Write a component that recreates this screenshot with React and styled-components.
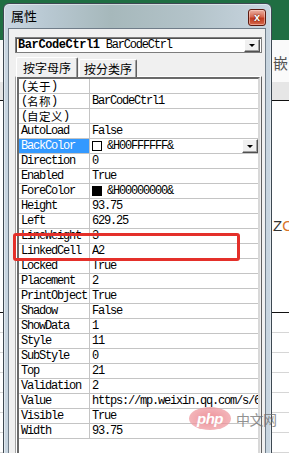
import React from "react";
import styled, { createGlobalStyle } from "styled-components";

const Global = createGlobalStyle`
  html, body { margin: 0; padding: 0; }
  body { width: 289px; height: 453px; overflow: hidden; background: #fff; }
  * { box-sizing: border-box; }
`;

const Stage = styled.div`
  position: relative;
  width: 289px;
  height: 453px;
  overflow: hidden;
  background: #fff;
  font-family: "Liberation Mono", "Noto Sans CJK SC", monospace;
`;

/* ---------- Excel backdrop ---------- */
const Backdrop = styled.div`
  display: flex;
  flex-direction: column;
  width: 100%;
  height: 100%;
`;
const Ribbon = styled.div`
  height: 40px;
  flex: none;
  background: #1f6e42;
`;
const SheetHeader = styled.div`
  height: 61px;
  flex: none;
  padding: 14px 0 0 273px;
  background: linear-gradient(#fafafa 0 70%, #e6e6e6 70%);
  border-bottom: 1px solid #111;
  font: 15px "Noto Sans CJK SC", sans-serif;
  color: #555;
  line-height: 18px;
`;
const ChartArea = styled.div`
  height: 212px;
  flex: none;
  padding: 116px 0 0 273px;
  border-bottom: 1px solid #111;
  font: 15px "Liberation Sans", sans-serif;
  color: #333;
  line-height: 18px;
`;
const Orange = styled.span`
  color: #d8762c;
`;
const SheetRow = styled.div`
  height: 20px;
  flex: none;
  border-bottom: 1px solid #d6d6d6;
`;

/* ---------- dialog window ---------- */
const Window = styled.div`
  position: absolute;
  left: 3px;
  top: 3px;
  width: 269px;
  height: 470px;
  display: flex;
  flex-direction: column;
  border: 1px solid #3d4852;
  border-radius: 6px 6px 0 0;
  background: linear-gradient(90deg, #c9d6e1 0%, #b9c9d3 15%, #a6b8bb 40%, #b3c3c9 70%, #c8d5e0 100%);
  box-shadow: inset 0 0 0 1px rgba(255, 255, 255, 0.45);
  padding: 0 5px 0 4px;
`;
const TitleBar = styled.div`
  height: 24px;
  flex: none;
  display: flex;
  align-items: flex-start;
  justify-content: space-between;
  padding: 0 0 0 3px;
`;
const Title = styled.span`
  font: 13px "Noto Sans CJK SC", sans-serif;
  line-height: 22px;
  color: #000;
  padding-top: 1px;
`;
const CloseButton = styled.div`
  width: 18px;
  height: 17px;
  margin-top: 5px;
  border: 1px solid #5c1a10;
  border-radius: 3px;
  background: linear-gradient(#eab0a3 0%, #d86a52 45%, #c13b20 55%, #d5684c 100%);
  box-shadow: inset 0 0 0 1px rgba(255, 220, 210, 0.5);
  display: flex;
  align-items: center;
  justify-content: center;
  color: #fff;
  font: bold 11px "Liberation Sans", sans-serif;
  line-height: 1;
  text-shadow: 0 0 2px #6a1a0c, 0 0 1px #6a1a0c;
`;
const Client = styled.div`
  flex: 1;
  display: flex;
  flex-direction: column;
  background: #f0f0f0;
  border: 1px solid #707d89;
  border-bottom: none;
`;

/* ---------- combo ---------- */
const Combo = styled.div`
  margin: 8px 0 0 6px;
  width: 247px;
  height: 16px;
  display: flex;
  align-items: center;
  background: #fff;
  border: 1px solid #7d7d7d;
  box-shadow: inset 1px 1px 0 #505050;
  padding: 0 1px 0 2px;
  font-size: 12px;
  letter-spacing: -1.2px;
  line-height: 14px;
  color: #000;
  white-space: pre;
`;
const ComboBold = styled.b`
  font-weight: bold;
  letter-spacing: -0.4px;
`;
const ComboFill = styled.span`
  flex: 1;
`;
const DropButton = styled.div`
  width: 16px;
  height: ${(p) => p.$h || 13}px;
  flex: none;
  display: flex;
  align-items: center;
  justify-content: center;
  background: #f0f0f0;
  border-top: 1px solid #fff;
  border-left: 1px solid #fff;
  border-right: 1px solid #505050;
  border-bottom: 1px solid #505050;
  box-shadow: inset -1px -1px 0 #a0a0a0;
  &::after {
    content: "";
    border-left: 3px solid transparent;
    border-right: 3px solid transparent;
    border-top: 3px solid #000;
  }
`;

/* ---------- tabs ---------- */
const TabStrip = styled.div`
  display: flex;
  align-items: flex-end;
  margin: 4px 0 -1px 7px;
  height: 20px;
  position: relative;
  z-index: 1;
`;
const Tab = styled.div`
  height: ${(p) => (p.$active ? 20 : 18)}px;
  padding: 0 ${(p) => (p.$active ? 6 : 4)}px;
  display: flex;
  align-items: center;
  background: #f0f0f0;
  border-top: 1px solid #fff;
  border-left: 1px solid #fff;
  border-right: 1px solid #606060;
  border-radius: 2px 2px 0 0;
  box-shadow: inset -1px 0 0 #a0a0a0;
  font: 12px "Noto Sans CJK SC", sans-serif;
  line-height: 16px;
  color: #000;
  margin-right: ${(p) => (p.$active ? 1 : 0)}px;
`;
const TabPanel = styled.div`
  flex: 1;
  margin-left: 6px;
  width: 247px;
  display: flex;
  flex-direction: column;
  border-top: 1px solid #fff;
  border-left: 1px solid #a3a3a3;
  border-right: 1px solid #606060;
  box-shadow: inset 1px 0 0 #fff;
  padding: 0 1px;
`;

/* ---------- property grid ---------- */
const Grid = styled.div`
  flex: 1;
  background: #fff;
  border-top: 2px solid #6a6a6a;
  border-left: 2px solid #6a6a6a;
  border-right: 2px solid #d8d8d8;
  display: flex;
  flex-direction: column;
  font-size: 12px;
  letter-spacing: -1.2px;
  color: #000;
`;
const Row = styled.div`
  display: grid;
  grid-template-columns: 71px 1fr;
  height: 15px;
  flex: none;
  border-bottom: 1px solid #c4c4c4;
`;
const NameCell = styled.div`
  height: 14px;
  display: flex;
  align-items: center;
  border-right: 1px solid #c4c4c4;
  padding-left: 2px;
  line-height: 14px;
  white-space: pre;
  overflow: hidden;
  background: ${(p) => (p.$selected ? "#3399ff" : "transparent")};
  color: ${(p) => (p.$selected ? "#fff" : "#000")};
`;
const ValueCell = styled.div`
  height: 14px;
  display: flex;
  align-items: center;
  padding-left: 2px;
  line-height: 14px;
  white-space: nowrap;
  overflow: hidden;
`;
const ValueText = styled.span`
  flex: 1;
  overflow: hidden;
`;
const Cjk = styled.span`
  display: inline-block;
  vertical-align: top;
  height: 14px;
  overflow: hidden;
  font: 11.5px/14px "Noto Sans CJK SC", sans-serif;
  letter-spacing: 0.5px;
`;
const Swatch = styled.span`
  width: 10px;
  height: 10px;
  flex: none;
  margin-right: 5px;
  border: 1px solid #000;
  background: ${(p) => p.$color};
`;

/* ---------- overlays ---------- */
const Marker = styled.div`
  position: absolute;
  left: 13px;
  top: 233px;
  width: 227px;
  height: 28px;
  border: 3px solid #e4302a;
  border-radius: 3px;
`;
const Watermark = styled.div`
  position: absolute;
  left: 189px;
  top: 407px;
  display: flex;
  align-items: center;
  gap: 5px;
  opacity: 0.75;
`;
const PhpBadge = styled.span`
  width: 42px;
  height: 23px;
  border-radius: 50%;
  background: radial-gradient(ellipse at 50% 50%, #e9707a 0%, #f0a2a8 80%, #f6c6ca 100%);
  color: #fff;
  font: italic bold 15px/1 "Liberation Sans", sans-serif;
  display: flex;
  align-items: center;
  justify-content: center;
  letter-spacing: -0.5px;
`;
const WatermarkText = styled.span`
  font: 14px/1 "Noto Sans CJK SC", sans-serif;
  color: #6d6d6d;
  letter-spacing: -0.5px;
`;

const props = [
  { cjk: "关于" },
  { cjk: "名称", value: "BarCodeCtrl1" },
  { cjk: "自定义" },
  { name: "AutoLoad", value: "False" },
  { name: "BackColor", value: "&H00FFFFFF&", swatch: "#fff", selected: true, dropdown: true },
  { name: "Direction", value: "0" },
  { name: "Enabled", value: "True" },
  { name: "ForeColor", value: "&H00000000&", swatch: "#000" },
  { name: "Height", value: "93.75" },
  { name: "Left", value: "629.25" },
  { name: "LineWeight", value: "3" },
  { name: "LinkedCell", value: "A2" },
  { name: "Locked", value: "True" },
  { name: "Placement", value: "2" },
  { name: "PrintObject", value: "True" },
  { name: "Shadow", value: "False" },
  { name: "ShowData", value: "1" },
  { name: "Style", value: "11" },
  { name: "SubStyle", value: "0" },
  { name: "Top", value: "21" },
  { name: "Validation", value: "2" },
  { name: "Value", value: "https://mp.weixin.qq.com/s/6Hk2wQ" },
  { name: "Visible", value: "True" },
  { name: "Width", value: "93.75" },
];

export default function App() {
  return (
    <Stage>
      <Global />
      <Backdrop>
        <Ribbon />
        <SheetHeader>嵌</SheetHeader>
        <ChartArea>
          Z<Orange>O</Orange>
        </ChartArea>
        {Array.from({ length: 8 }).map((_, i) => (
          <SheetRow key={i} />
        ))}
      </Backdrop>

      <Window>
        <TitleBar>
          <Title>属性</Title>
          <CloseButton>x</CloseButton>
        </TitleBar>
        <Client>
          <Combo>
            <ComboBold>BarCodeCtrl1</ComboBold>
            <ComboFill> BarCodeCtrl</ComboFill>
            <DropButton />
          </Combo>
          <TabStrip>
            <Tab $active>按字母序</Tab>
            <Tab>按分类序</Tab>
          </TabStrip>
          <TabPanel>
            <Grid>
              {props.map((p, i) => (
                <Row key={i}>
                  <NameCell $selected={p.selected}>
                    {p.cjk ? (
                      <span>
                        (<Cjk>{p.cjk}</Cjk>)
                      </span>
                    ) : (
                      p.name
                    )}
                  </NameCell>
                  <ValueCell>
                    {p.swatch && <Swatch $color={p.swatch} />}
                    <ValueText>{p.value}</ValueText>
                    {p.dropdown && <DropButton $h={14} />}
                  </ValueCell>
                </Row>
              ))}
            </Grid>
          </TabPanel>
        </Client>
      </Window>

      <Marker />
      <Watermark>
        <PhpBadge>php</PhpBadge>
        <WatermarkText>中文网</WatermarkText>
      </Watermark>
    </Stage>
  );
}
